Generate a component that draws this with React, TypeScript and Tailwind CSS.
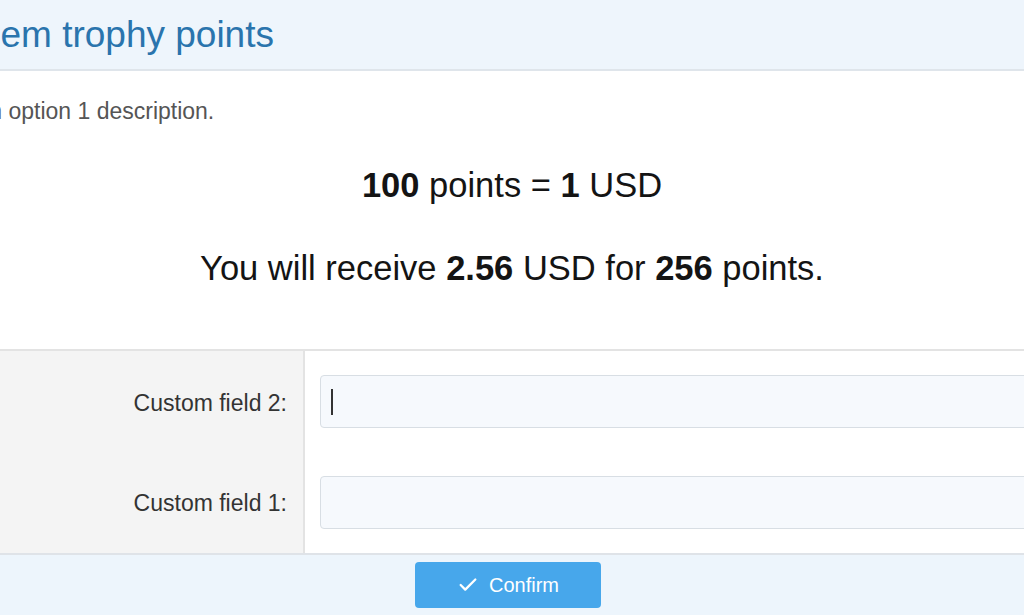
import { Check } from "lucide-react";

const font = { fontFamily: '"Liberation Sans", Arial, sans-serif' };

function FakeInput({ caret }: { caret?: boolean }) {
  return (
    <div className="flex h-[53px] w-[740px] items-center rounded-[4px] border border-[#d8dee4] bg-[#f6f9fd] px-[10px]">
      {caret && <span className="h-[26px] w-[2px] bg-[#333]" />}
    </div>
  );
}

const fields = [
  { label: "Custom field 2:", caret: true },
  { label: "Custom field 1:", caret: false },
];

export default function App() {
  return (
    <div className="h-[615px] w-[1024px] overflow-hidden bg-white" style={font}>
      <div className="flex h-[71px] items-center border-b-2 border-[#dfe5eb] bg-[#eef5fc]">
        <h1 className="ml-[-88px] whitespace-nowrap text-[37px] font-normal text-[#2a74ad]">
          Redeem trophy points
        </h1>
      </div>

      <div className="h-[280px] border-b-2 border-[#e3e3e3]">
        <p className="ml-[-122px] whitespace-nowrap pt-[27px] text-[23px] leading-[26px] text-[#555]">
          Redemption option 1 description.
        </p>
        <div className="mt-[41px] text-center text-[34.5px] leading-[40px] text-[#141414]">
          <b>100</b> points = <b>1</b> USD
        </div>
        <div className="mt-[43px] text-center text-[34.5px] leading-[40px] text-[#141414]">
          You will receive <b>2.56</b> USD for <b>256</b> points.
        </div>
      </div>

      <div className="flex">
        <div className="flex w-[305px] shrink-0 flex-col items-end gap-[48px] border-r-2 border-[#e3e3e3] bg-[#f4f4f4] pt-[26px] pb-[24px] pr-[16px] text-[23px] text-[#333]">
          {fields.map((f) => (
            <span key={f.label} className="h-[52px] leading-[53px]">
              {f.label}
            </span>
          ))}
        </div>
        <div className="flex flex-1 flex-col gap-[48px] py-[24px] pl-[15px]">
          {fields.map((f) => (
            <FakeInput key={f.label} caret={f.caret} />
          ))}
        </div>
      </div>

      <div className="flex h-[70px] items-start border-t-2 border-[#dfe3e8] bg-[#edf5fc] pl-[415px] pt-[7px]">
        <button className="flex h-[46px] w-[186px] items-center justify-center gap-[10px] rounded-[4px] bg-[#47a7eb] text-[20px] text-white">
          <Check size={22} strokeWidth={2.5} />
          <span>Confirm</span>
        </button>
      </div>
    </div>
  );
}
